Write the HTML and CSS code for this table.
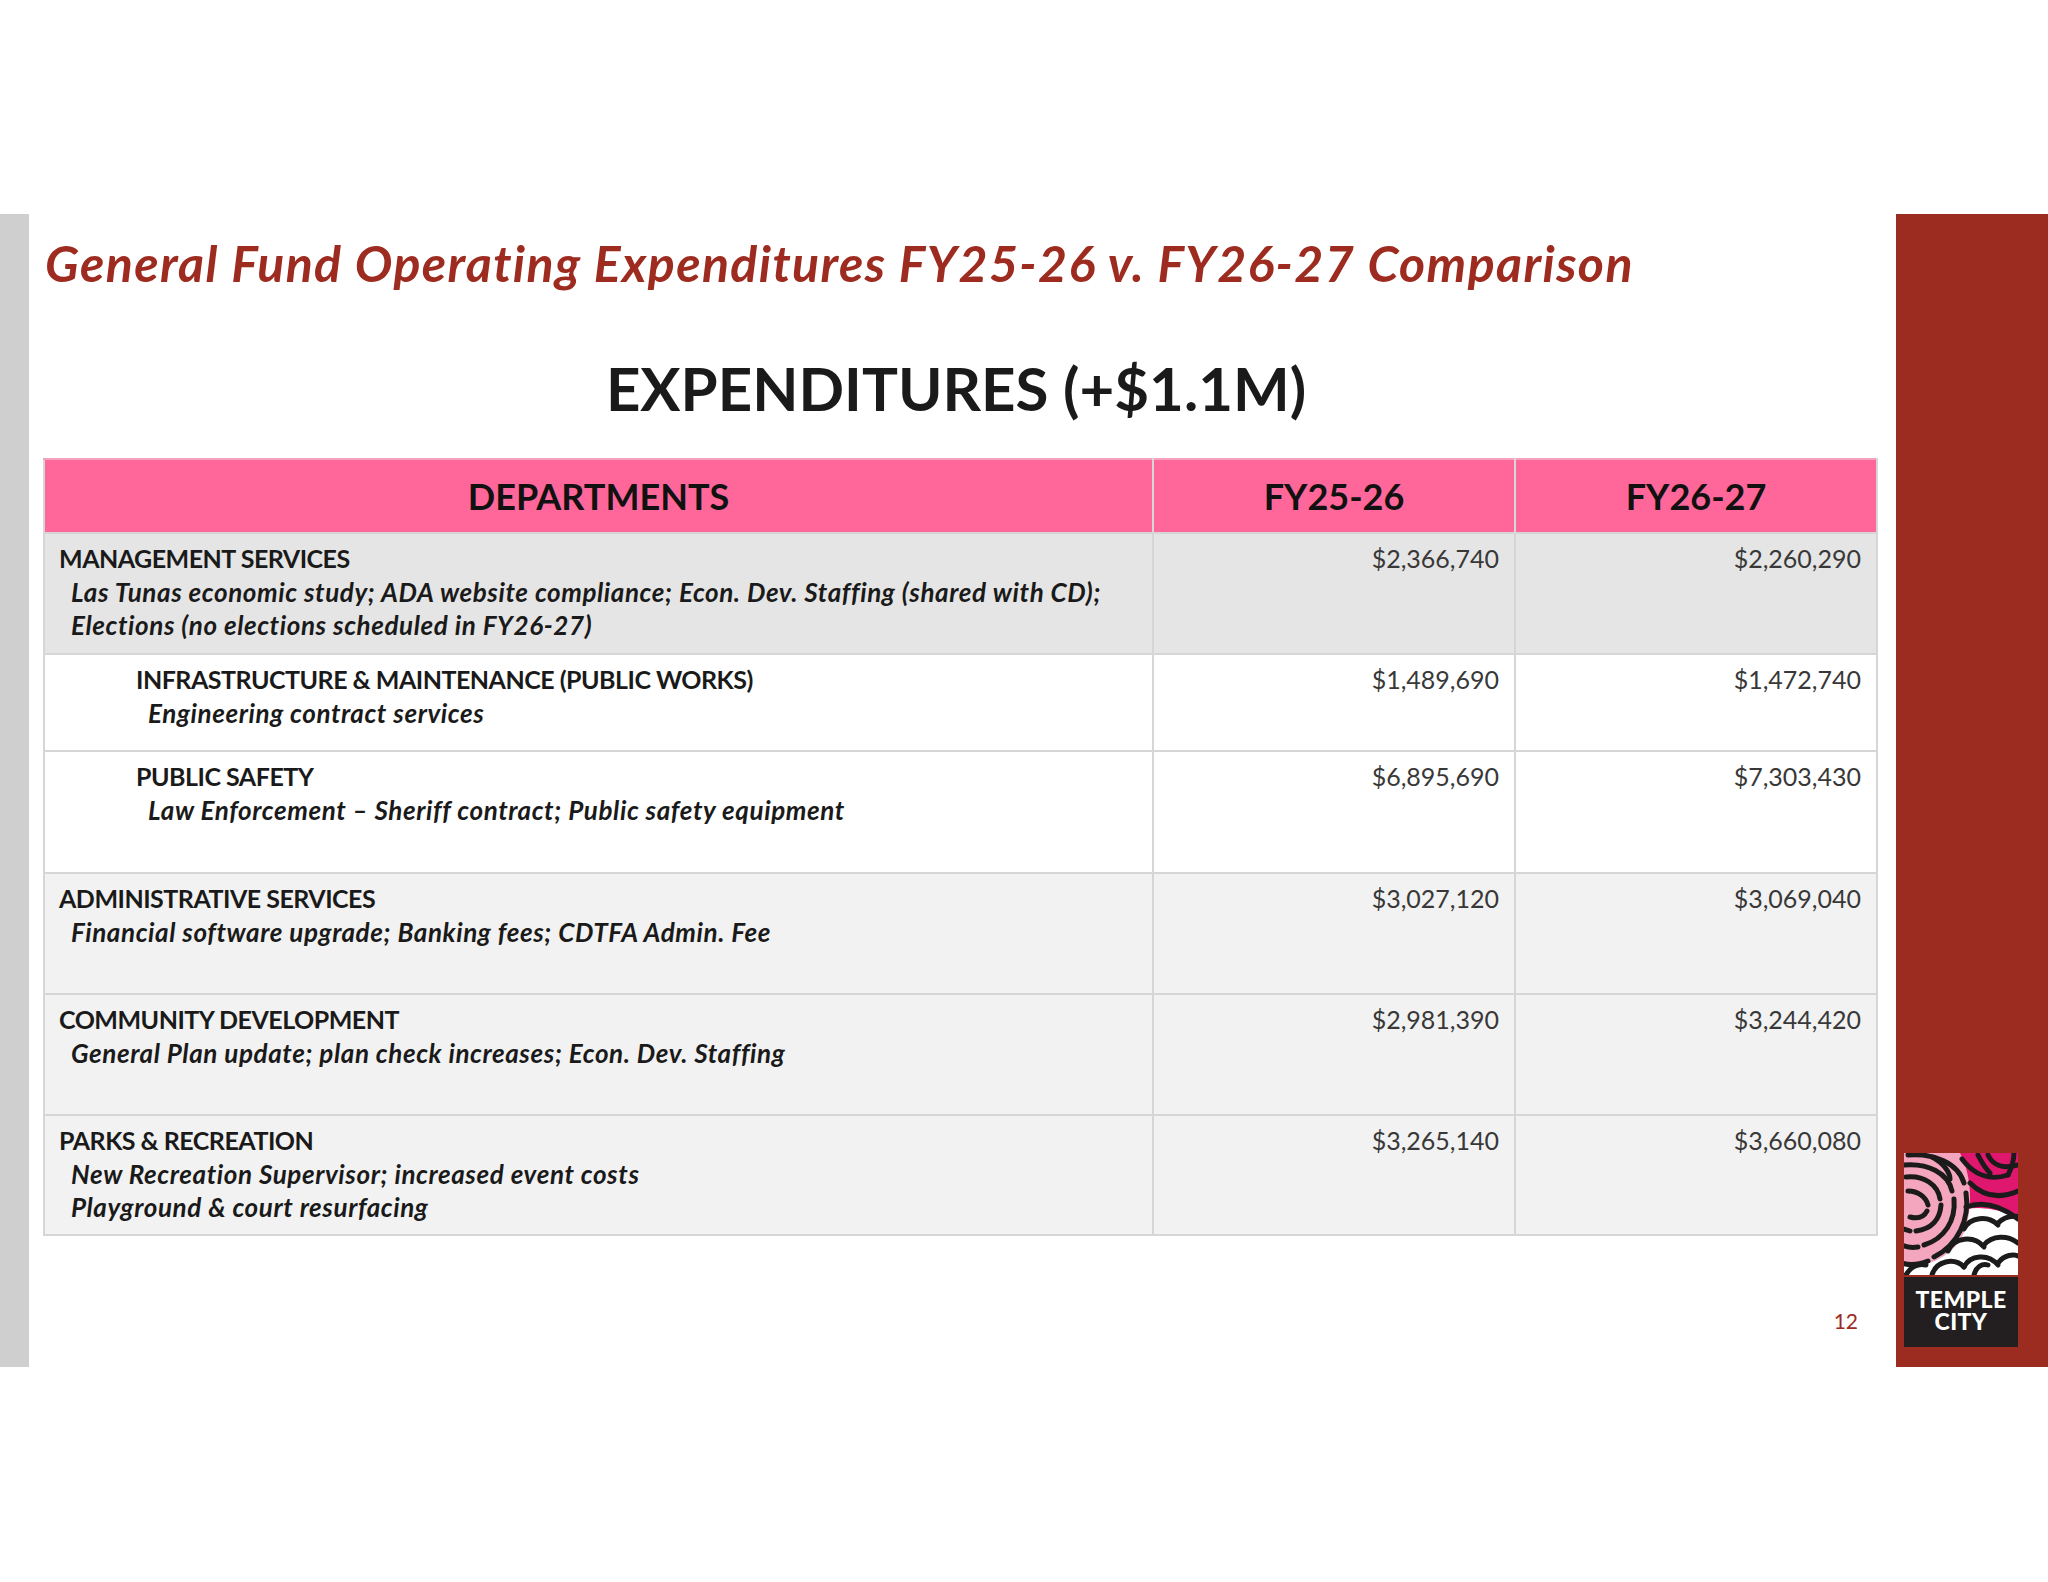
FILE: index.html
```html
<!DOCTYPE html>
<html lang="en">
<head>
<meta charset="utf-8">
<title>General Fund Operating Expenditures</title>
<link rel="stylesheet" href="styles.css">
</head>
<body>
<div class="page">
  <div class="slide">
    <div class="side-gray"></div>
    <div class="content">
      <h1 class="title">General Fund Operating Expenditures FY25-26 v. FY26-27 Comparison</h1>
      <h2 class="heading">EXPENDITURES (+$1.1M)</h2>
      <table class="grid">
        <colgroup>
          <col class="c-dept">
          <col class="c-num">
          <col class="c-num">
        </colgroup>
        <thead>
          <tr class="head">
            <th>DEPARTMENTS</th>
            <th>FY25-26</th>
            <th>FY26-27</th>
          </tr>
        </thead>
        <tbody>
          <tr class="r1 bg-dark">
            <td class="dept"><div class="name">MANAGEMENT SERVICES</div><div class="desc">Las Tunas economic study; ADA website compliance; Econ. Dev. Staffing (shared with CD);<br>Elections (no elections scheduled in FY26-27)</div></td>
            <td class="num">$2,366,740</td>
            <td class="num">$2,260,290</td>
          </tr>
          <tr class="r2 bg-white">
            <td class="dept indent"><div class="name">INFRASTRUCTURE &amp; MAINTENANCE (PUBLIC WORKS)</div><div class="desc">Engineering contract services</div></td>
            <td class="num">$1,489,690</td>
            <td class="num">$1,472,740</td>
          </tr>
          <tr class="r3 bg-white">
            <td class="dept indent"><div class="name">PUBLIC SAFETY</div><div class="desc">Law Enforcement – Sheriff contract; Public safety equipment</div></td>
            <td class="num">$6,895,690</td>
            <td class="num">$7,303,430</td>
          </tr>
          <tr class="r4 bg-light">
            <td class="dept"><div class="name">ADMINISTRATIVE SERVICES</div><div class="desc">Financial software upgrade; Banking fees; CDTFA Admin. Fee</div></td>
            <td class="num">$3,027,120</td>
            <td class="num">$3,069,040</td>
          </tr>
          <tr class="r5 bg-light">
            <td class="dept"><div class="name">COMMUNITY DEVELOPMENT</div><div class="desc">General Plan update; plan check increases; Econ. Dev. Staffing</div></td>
            <td class="num">$2,981,390</td>
            <td class="num">$3,244,420</td>
          </tr>
          <tr class="r6 bg-light">
            <td class="dept"><div class="name">PARKS &amp; RECREATION</div><div class="desc">New Recreation Supervisor; increased event costs<br>Playground &amp; court resurfacing</div></td>
            <td class="num">$3,265,140</td>
            <td class="num">$3,660,080</td>
          </tr>
        </tbody>
      </table>
      <div class="pagenum">12</div>
    </div>
    <div class="side-red">
      <div class="logo">
        <svg class="logo-art" viewBox="0 0 114 122" width="114" height="122">
          <rect width="114" height="122" fill="#ffffff"/>
          <path d="M50 0 H114 V66 Q90 52 62 56 Q62 26 50 0 Z" fill="#e0176f"/>
          <path d="M0 0 H56 C68 22 70 60 58 84 C50 98 36 108 18 112 L0 112 Z" fill="#f4a6bf"/>
          <g fill="none" stroke="#1b1b1b" stroke-width="5" stroke-linecap="round">
            <path d="M4 2 C30 0 54 10 60 30"/>
            <path d="M62 40 C66 66 54 92 30 104"/>
            <path d="M24 108 C14 112 4 112 -2 110"/>
            <path d="M0 12 C24 10 44 20 48 38"/>
            <path d="M50 46 C52 68 40 86 20 92"/>
            <path d="M14 94 C8 95 2 94 -2 92"/>
            <path d="M2 24 C20 22 34 32 36 46"/>
            <path d="M37 52 C36 66 28 76 12 78"/>
            <path d="M6 78 L0 76"/>
            <path d="M4 38 C14 38 22 44 24 52"/>
            <path d="M23 58 C20 64 14 66 6 64"/>
            <path d="M28 4 C40 10 46 20 46 26"/>
            <path d="M58 6 C70 22 86 28 104 22"/>
            <path d="M66 30 C80 44 96 46 114 38"/>
            <path d="M84 2 C90 14 100 16 114 12"/>
            <path d="M74 2 C78 10 82 16 86 20"/>
            <path d="M104 22 C108 14 110 8 110 0"/>
            <path d="M62 54 C78 48 96 52 114 66"/>
            <path d="M60 76 C66 64 84 62 94 72"/>
            <path d="M94 70 C100 64 108 62 116 64"/>
            <path d="M44 98 C50 84 70 82 80 94"/>
            <path d="M80 92 C88 82 104 82 114 90"/>
            <path d="M28 122 C32 108 50 104 60 114"/>
            <path d="M60 114 C66 102 84 100 94 112"/>
            <path d="M94 110 C100 102 110 100 116 104"/>
            <path d="M2 122 C6 114 14 110 22 112"/>
            <path d="M70 122 C72 114 78 110 84 112"/>
          </g>
        </svg>
        <div class="logo-label">
          <div class="logo-line">TEMPLE</div>
          <div class="logo-line">CITY</div>
        </div>
      </div>
    </div>
  </div>
</div>
</body>
</html>
```

FILE: styles.css
```css
html, body {
  margin: 0;
  padding: 0;
  background: #ffffff;
}

body {
  font-family: "Lato", "Open Sans", sans-serif;
  color: #1a1a1a;
}

.page {
  width: 2048px;
  height: 1582px;
  padding-top: 214px;
  box-sizing: border-box;
}

.slide {
  display: flex;
  height: 1153px;
}

.side-gray {
  flex: none;
  width: 29px;
  background: #cfcfcf;
}

.content {
  flex: 1;
  display: flex;
  flex-direction: column;
  min-width: 0;
}

.side-red {
  flex: none;
  width: 152px;
  background: #9c2b20;
  display: flex;
  flex-direction: column;
  justify-content: flex-end;
  padding: 0 0 20px 8px;
  box-sizing: border-box;
}

.logo {
  width: 114px;
  display: flex;
  flex-direction: column;
}

.logo-art {
  display: block;
}

.logo-label {
  margin-top: 2px;
  height: 70px;
  box-sizing: border-box;
  padding-top: 11px;
  background: #231f20;
  color: #ffffff;
  text-align: center;
  font-family: "Lato", "Open Sans", sans-serif;
  font-weight: 900;
  font-size: 23px;
  line-height: 22px;
  letter-spacing: 0.4px;
}

.title {
  margin: 19px 0 0 16px;
  font-size: 50px;
  line-height: 60px;
  font-weight: 700;
  font-style: italic;
  letter-spacing: 1.4px;
  color: #9d2b1f;
  white-space: nowrap;
}

.heading {
  margin: 59px 13px 0 0;
  text-align: center;
  font-size: 60px;
  line-height: 72px;
  font-weight: 700;
  color: #1a1a1a;
}

.grid {
  margin: 34px 0 0 14px;
  width: 1834px;
  border-collapse: collapse;
  table-layout: fixed;
  border: 2px solid #d6d6d6;
}

.c-dept { width: 1109px; }
.c-num { width: 362px; }

.grid th,
.grid td {
  border: 2px solid #d6d6d6;
  padding: 0;
}

.grid .head th {
  height: 72px;
  background: #ff6699;
  color: #111111;
  font-size: 36px;
  font-weight: 700;
  text-align: center;
  vertical-align: middle;
  border-top-color: #f3a3bd;
}

.grid td {
  vertical-align: top;
  padding-top: 8px;
  font-size: 25px;
  line-height: 33.5px;
}

.grid .r1 td { height: 111px; }
.grid .r2 td { height: 87px; }
.grid .r3 td { height: 112px; }
.grid .r4 td { height: 111px; }
.grid .r5 td { height: 111px; }
.grid .r6 td { height: 110px; }

.grid .bg-dark td { background: #e5e5e5; }
.grid .bg-white td { background: #ffffff; }
.grid .bg-light td { background: #f2f2f2; }

.grid .dept {
  padding-left: 14px;
}

.grid .dept.indent {
  padding-left: 91px;
}

.name {
  font-weight: 700;
  letter-spacing: -0.5px;
  color: #1a1a1a;
}

.desc {
  padding-left: 12px;
  font-size: 26px;
  letter-spacing: 0.6px;
  font-style: italic;
  font-weight: 700;
  color: #1a1a1a;
  white-space: nowrap;
}

.grid .num {
  text-align: right;
  padding-right: 15px;
  color: #383838;
  font-weight: 400;
}

.pagenum {
  align-self: flex-end;
  margin: 73px 38px 0 0;
  font-size: 21px;
  line-height: 24px;
  color: #9d2b1f;
}
```
